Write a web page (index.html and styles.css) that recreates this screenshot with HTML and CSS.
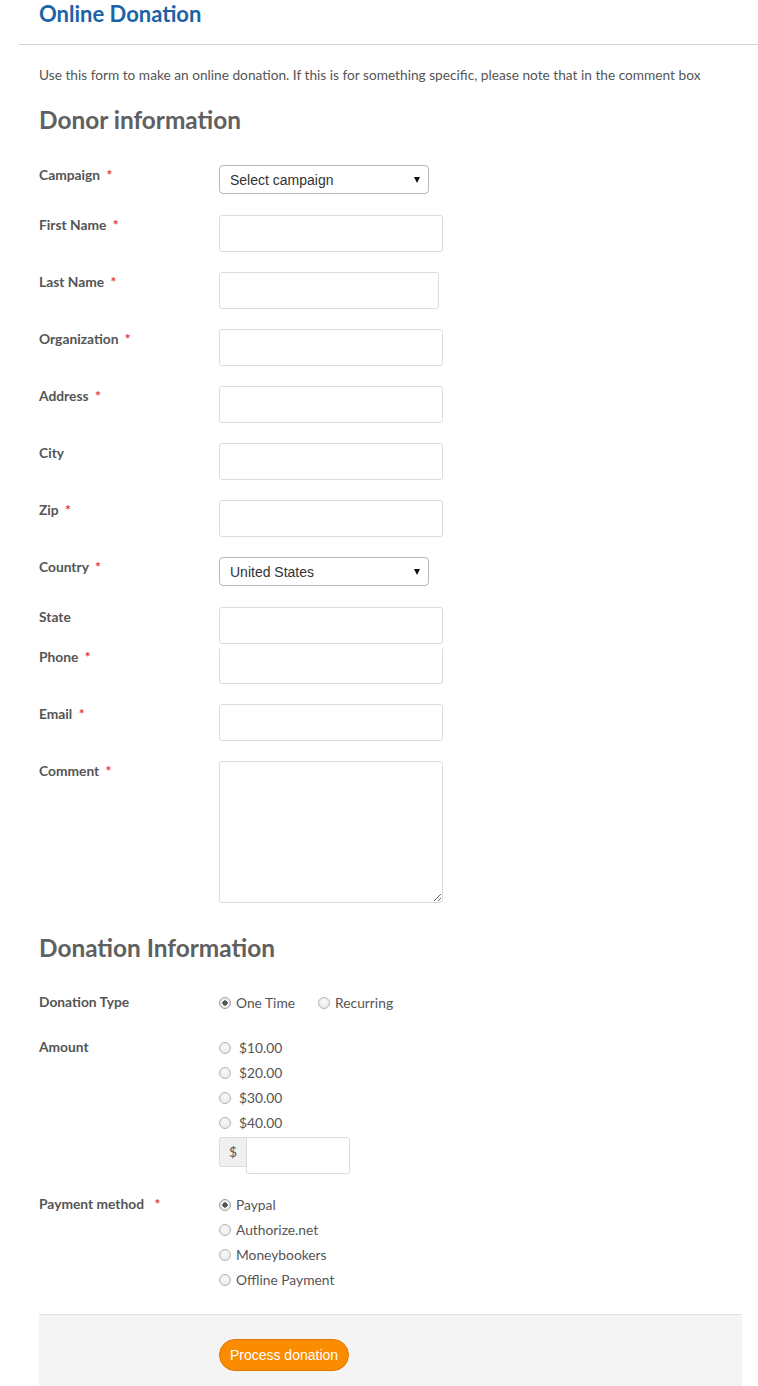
FILE: index.html
```html
<!DOCTYPE html>
<html lang="en">

<head>
  <meta charset="UTF-8">
  <title>Online Donation</title>
  <link rel="stylesheet" href="styles.css">
</head>

<body>
  <div class="page">
    <div class="page-header">
      <h1>Online Donation</h1>
    </div>

    <form class="donation-form">
      <p class="intro">Use this form to make an online donation. If this is for something specific, please note that in the comment box</p>

      <h2>Donor information</h2>

      <div class="row row-select">
        <label>Campaign <span class="req">*</span></label>
        <div class="select"><span>Select campaign</span><i class="caret"></i></div>
      </div>
      <div class="row">
        <label>First Name <span class="req">*</span></label>
        <input type="text">
      </div>
      <div class="row">
        <label>Last Name <span class="req">*</span></label>
        <input type="text" class="narrow">
      </div>
      <div class="row">
        <label>Organization <span class="req">*</span></label>
        <input type="text">
      </div>
      <div class="row">
        <label>Address <span class="req">*</span></label>
        <input type="text">
      </div>
      <div class="row">
        <label>City</label>
        <input type="text">
      </div>
      <div class="row">
        <label>Zip <span class="req">*</span></label>
        <input type="text">
      </div>
      <div class="row row-select">
        <label>Country <span class="req">*</span></label>
        <div class="select"><span>United States</span><i class="caret"></i></div>
      </div>
      <div class="row row-tight">
        <label>State</label>
        <input type="text">
      </div>
      <div class="row row-phone">
        <label>Phone <span class="req">*</span></label>
        <input type="text">
      </div>
      <div class="row">
        <label>Email <span class="req">*</span></label>
        <input type="text">
      </div>
      <div class="row">
        <label>Comment <span class="req">*</span></label>
        <textarea></textarea>
      </div>

      <h2 class="second">Donation Information</h2>

      <div class="row row-radio">
        <label>Donation Type</label>
        <div class="inline-radios">
          <span class="radio checked">One Time</span>
          <span class="radio">Recurring</span>
        </div>
      </div>
      <div class="row row-radio amount-row">
        <label>Amount</label>
        <div class="radios amounts">
          <span class="radio">$10.00</span>
          <span class="radio">$20.00</span>
          <span class="radio">$30.00</span>
          <span class="radio">$40.00</span>
          <div class="input-group">
            <span class="addon">$</span>
            <input type="text">
          </div>
        </div>
      </div>
      <div class="row row-radio last">
        <label>Payment method <span class="req pad">*</span></label>
        <div class="radios">
          <span class="radio checked">Paypal</span>
          <span class="radio">Authorize.net</span>
          <span class="radio">Moneybookers</span>
          <span class="radio">Offline Payment</span>
        </div>
      </div>

      <div class="form-actions">
        <button type="button">Process donation</button>
      </div>
    </form>
  </div>
</body>

</html>
```

FILE: styles.css
```css
body {
  font-family: Lato, 'Open Sans', Arial, sans-serif;
  margin: 0;
  padding: 0;
  background-color: #fff;
  color: #555;
}

.page {
  margin-left: 19px;
}

.page-header {
  border-bottom: 1px solid #d4d4d4;
  padding: 0 20px;
  height: 44px;
}

h1 {
  margin: 0;
  font-size: 22px;
  line-height: 28px;
  font-weight: 700;
  color: #1b63a6;
}

.donation-form {
  padding: 0 16px 0 20px;
}

.intro {
  margin: 20px 0 0;
  font-size: 13.7px;
  line-height: 20px;
}

h2 {
  margin: 19px 0 29px;
  font-size: 24.4px;
  line-height: 32px;
  font-weight: 700;
  color: #606060;
}

h2.second {
  margin: 29px 0 26px;
}

.row {
  display: flex;
  align-items: flex-start;
  margin-bottom: 20px;
}

.row label {
  width: 180px;
  flex-shrink: 0;
  font-size: 13.8px;
  font-weight: 700;
  line-height: 18px;
  padding-top: 1px;
  color: #555;
}

.row-select {
  margin-bottom: 21px;
}

.req {
  color: #e33;
  margin-left: 3px;
}

.req.pad {
  margin-left: 7px;
}

input[type="text"] {
  box-sizing: border-box;
  width: 224px;
  height: 37px;
  margin: 0;
  border: 1px solid #d9dde0;
  border-radius: 3px;
  background: #fff;
  padding: 4px 8px;
  font-size: 14px;
}

input.narrow {
  width: 220px;
}

.row-tight {
  margin-bottom: 4px;
}

.row-phone input[type="text"] {
  height: 36px;
  border-top-color: transparent;
  border-radius: 0 0 3px 3px;
}

.row-phone label {
  padding-top: 0;
}

.select {
  box-sizing: border-box;
  width: 210px;
  height: 29px;
  border: 1px solid #b8b8b8;
  border-radius: 4px;
  display: flex;
  align-items: center;
  justify-content: space-between;
  padding: 1px 8px 0 10px;
  font-family: 'Liberation Sans', Arial, sans-serif;
  font-size: 14px;
  color: #333;
}

.caret {
  width: 0;
  height: 0;
  border-left: 3px solid transparent;
  border-right: 3px solid transparent;
  border-top: 6px solid #111;
}

textarea {
  box-sizing: border-box;
  width: 224px;
  height: 142px;
  margin: 0;
  border: 1px solid #d9dde0;
  border-radius: 3px;
  resize: both;
}

.row-radio label {
  padding-top: 3px;
}

.amount-row {
  margin-bottom: 18px;
}

.row-radio.last {
  margin-bottom: 22px;
}

.inline-radios {
  display: flex;
  gap: 23px;
}

.radios {
  display: flex;
  flex-direction: column;
}

.radio {
  display: flex;
  align-items: center;
  height: 25px;
  font-size: 13.8px;
  color: #555;
  line-height: 18px;
}

.radio::before {
  content: '';
  box-sizing: border-box;
  width: 12px;
  height: 12px;
  border-radius: 50%;
  border: 1px solid #b5b5b5;
  background: radial-gradient(circle at 50% 40%, #fafafa 0%, #e4e4e4 100%);
  margin-right: 5px;
  flex-shrink: 0;
}

.amounts .radio::before {
  margin-right: 8px;
}

.radio.checked::before {
  background: radial-gradient(circle, #555 0 2.4px, #f2f2f2 2.9px, #e2e2e2 100%);
  border-color: #a0a0a0;
}

.input-group {
  display: flex;
  align-items: flex-start;
  margin-top: 2px;
}

.input-group .addon {
  box-sizing: border-box;
  width: 27px;
  height: 30px;
  background: #f0f0f0;
  border: 1px solid #d9dde0;
  border-right: 0;
  border-radius: 3px 0 0 3px;
  font-size: 13.8px;
  line-height: 28px;
  padding-left: 9px;
  color: #555;
}

.input-group input[type="text"] {
  width: 104px;
  border-radius: 0 3px 3px 3px;
}

.form-actions {
  border-top: 1px solid #e2e2e2;
  background: #f4f4f4;
  padding: 24px 0 30px 180px;
}

.form-actions button {
  box-sizing: border-box;
  height: 32px;
  width: 130px;
  border: 1px solid #e07800;
  border-radius: 16px;
  background: #fb8c00;
  color: #fff;
  font-family: 'Liberation Sans', Arial, sans-serif;
  font-size: 14px;
  padding: 0;
}
```
